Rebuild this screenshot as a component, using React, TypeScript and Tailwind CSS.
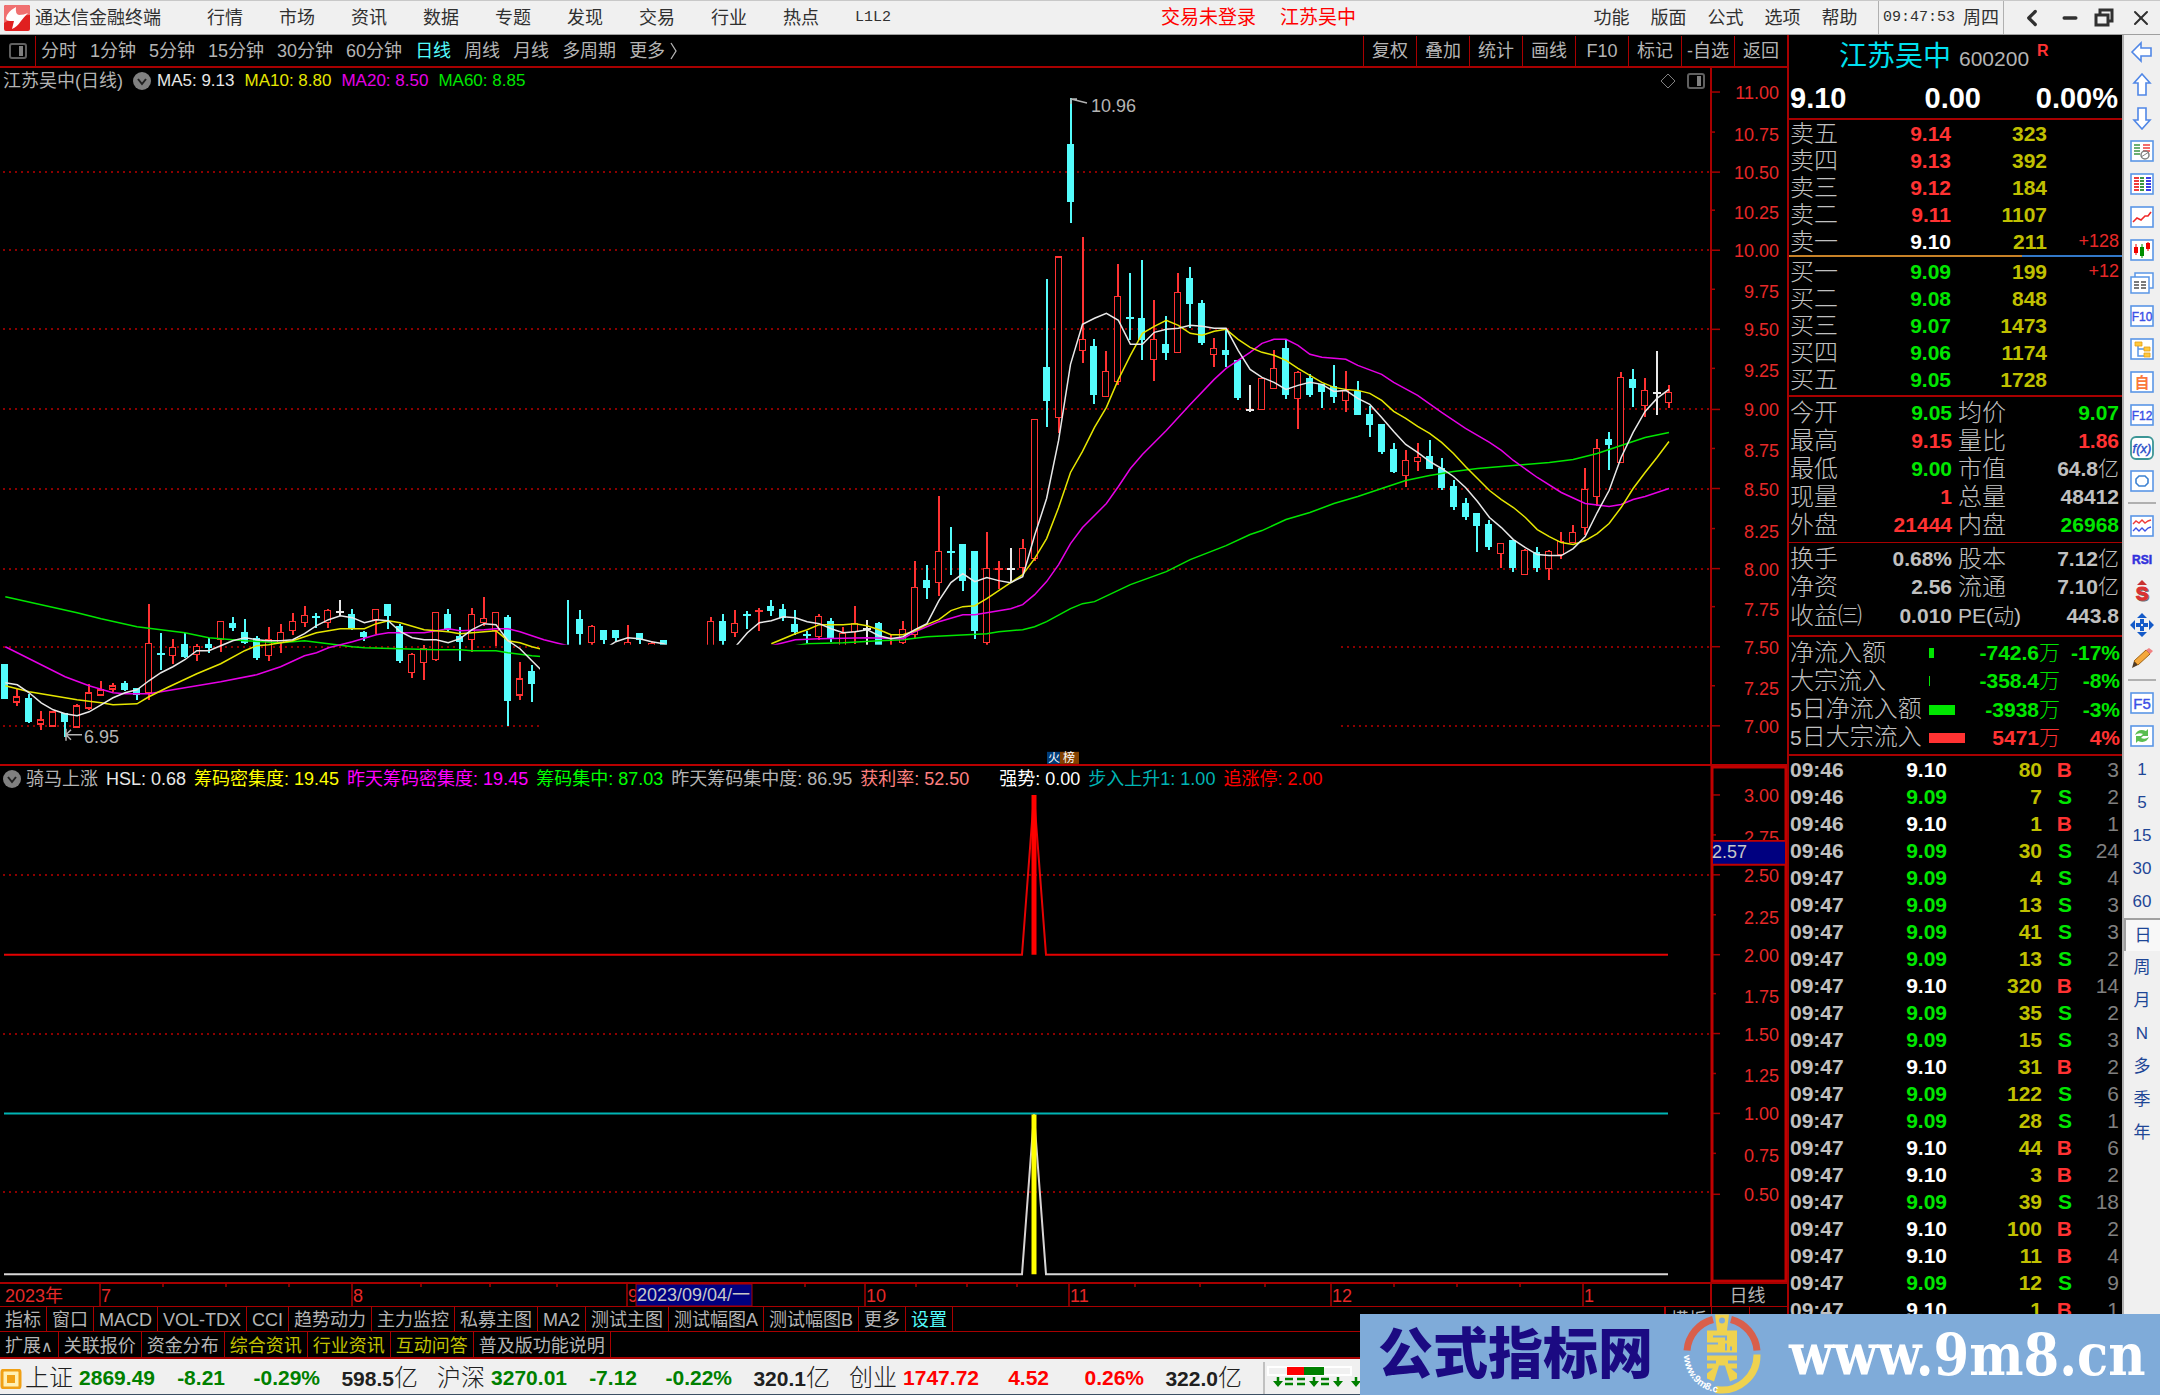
import React from "react";
import { ChevronLeft, Minus, X } from "lucide-react";

type Tone = "r" | "c" | "w";
// index, tone, high, body top, body bottom, low
type Candle = [number, Tone, number, number, number, number];

const candles: Candle[] = [
  [0, "c", 664, 664, 697, 697], [1, "r", 688, 696, 701, 705], [2, "c", 693, 698, 720, 722],
  [3, "r", 710, 719, 723, 729], [4, "r", 711, 711, 725, 725], [5, "c", 713, 713, 720, 736],
  [6, "r", 703, 705, 726, 726], [7, "r", 683, 692, 707, 709], [8, "r", 680, 689, 694, 694],
  [9, "r", 682, 685, 688, 691], [10, "c", 680, 683, 688, 690], [11, "c", 688, 688, 693, 699],
  [12, "r", 603, 643, 692, 699], [13, "c", 632, 653, 654, 669], [14, "r", 638, 647, 655, 663],
  [15, "c", 632, 644, 656, 657], [16, "r", 643, 646, 654, 660], [17, "c", 637, 644, 647, 652],
  [18, "r", 620, 621, 639, 651], [19, "c", 616, 623, 627, 630], [20, "c", 618, 632, 642, 643],
  [21, "c", 635, 638, 657, 659], [22, "r", 626, 639, 655, 660], [23, "r", 623, 632, 642, 652],
  [24, "r", 612, 621, 630, 634], [25, "r", 605, 615, 622, 626], [26, "c", 612, 616, 617, 627],
  [27, "r", 608, 610, 622, 627], [28, "w", 599, 611, 612, 615], [29, "c", 608, 614, 628, 629],
  [30, "c", 630, 632, 636, 640], [31, "r", 608, 609, 619, 633], [32, "c", 604, 604, 615, 628],
  [33, "c", 623, 626, 660, 662], [34, "r", 652, 654, 672, 677], [35, "r", 644, 648, 662, 679],
  [36, "r", 611, 612, 659, 660], [37, "c", 608, 614, 629, 631], [38, "c", 626, 636, 641, 660],
  [39, "r", 607, 614, 639, 651], [40, "r", 596, 618, 622, 625], [41, "r", 612, 612, 630, 645],
  [42, "c", 614, 617, 699, 725], [43, "r", 661, 678, 694, 699], [44, "c", 664, 671, 682, 701],
  [47, "c", 599, 646, 664, 668], [48, "c", 609, 619, 633, 645], [49, "r", 624, 626, 642, 645],
  [50, "c", 630, 630, 639, 643], [51, "c", 630, 630, 637, 641], [52, "r", 624, 642, 646, 648],
  [53, "c", 633, 633, 639, 643], [54, "r", 640, 643, 648, 650], [55, "c", 639, 640, 666, 668],
  [59, "r", 616, 621, 660, 665], [60, "c", 613, 621, 640, 645], [61, "r", 609, 623, 632, 636],
  [62, "c", 610, 614, 615, 628], [63, "r", 607, 610, 612, 630], [64, "c", 599, 606, 610, 615],
  [65, "c", 603, 609, 617, 620], [66, "c", 609, 624, 631, 634], [67, "c", 630, 634, 636, 643],
  [68, "r", 613, 616, 636, 639], [69, "c", 617, 621, 638, 641], [70, "r", 626, 633, 648, 650],
  [71, "r", 605, 623, 631, 643], [72, "w", 619, 628, 629, 650], [73, "c", 621, 623, 656, 658],
  [74, "r", 633, 650, 658, 660], [75, "r", 620, 629, 642, 643], [76, "r", 560, 587, 634, 638],
  [77, "c", 564, 580, 587, 598], [78, "r", 495, 551, 582, 595], [79, "c", 526, 551, 552, 574],
  [80, "c", 544, 544, 580, 590], [81, "c", 551, 551, 630, 638], [82, "r", 531, 568, 642, 646],
  [83, "r", 560, 568, 570, 588], [84, "w", 547, 568, 569, 582], [85, "r", 538, 548, 567, 574],
  [86, "r", 419, 419, 558, 560], [87, "c", 279, 367, 400, 427], [88, "r", 257, 257, 417, 433],
  [89, "c", 98, 145, 201, 223], [90, "r", 237, 339, 350, 363], [91, "c", 339, 346, 394, 404],
  [92, "r", 351, 371, 396, 396], [93, "r", 264, 296, 381, 385], [94, "c", 273, 317, 318, 340],
  [95, "c", 260, 318, 339, 360], [96, "r", 300, 339, 359, 381], [97, "c", 316, 344, 352, 360],
  [98, "r", 273, 292, 352, 352], [99, "c", 267, 279, 303, 328], [100, "c", 300, 303, 342, 345],
  [101, "r", 338, 348, 354, 367], [102, "c", 329, 350, 354, 367], [103, "c", 360, 360, 397, 400],
  [104, "w", 385, 409, 410, 412], [105, "r", 378, 378, 409, 409], [106, "r", 350, 368, 388, 389],
  [107, "c", 340, 348, 394, 399], [108, "r", 371, 372, 398, 429], [109, "c", 374, 378, 394, 397],
  [110, "c", 384, 384, 391, 408], [111, "c", 365, 386, 396, 403], [112, "r", 371, 390, 400, 412],
  [113, "c", 381, 391, 414, 414], [114, "c", 406, 414, 424, 437], [115, "c", 424, 424, 451, 454],
  [116, "c", 443, 449, 471, 473], [117, "r", 450, 460, 475, 486], [118, "r", 443, 457, 461, 471],
  [119, "c", 440, 456, 468, 468], [120, "c", 458, 468, 487, 489], [121, "c", 480, 486, 506, 509],
  [122, "c", 497, 503, 516, 519], [123, "c", 513, 513, 525, 551], [124, "c", 519, 524, 546, 549],
  [125, "r", 543, 543, 553, 567], [126, "c", 540, 540, 567, 571], [127, "r", 548, 550, 574, 574],
  [128, "c", 546, 552, 567, 571], [129, "r", 549, 551, 568, 579], [130, "r", 531, 541, 554, 558],
  [131, "r", 524, 532, 542, 542], [132, "r", 468, 489, 527, 534], [133, "r", 439, 448, 496, 505],
  [134, "c", 432, 439, 444, 470], [135, "r", 372, 377, 462, 462], [136, "c", 369, 379, 387, 407],
  [137, "r", 378, 390, 405, 417], [138, "w", 351, 392, 393, 415], [139, "r", 385, 392, 402, 408],
];

const ma5Left = [
  682, 684, 692, 702, 709, 713, 715, 711, 704, 697, 692, 689, 680, 672, 666, 659, 650, 650, 645, 640, 637, 639, 640,
  640, 639, 633, 625, 619, 615, 617, 622, 619, 620, 631, 637, 639, 639, 642, 638, 629, 623, 624, 640, 648, 660, 672,
];
const ma5Right = [
  649, 641, 637, 638, 641, 643, 650, 665, 668, 665, 658, 646, 632, 622, 620, 616, 617, 621, 623, 628, 632, 631, 629,
  635, 638, 636, 629, 623, 600, 582, 573, 581, 577, 580, 582, 576, 535, 498, 440, 364, 324, 318, 313, 320, 344, 344,
  332, 329, 328, 325, 326, 328, 328, 350, 369, 377, 382, 389, 385, 382, 384, 391, 390, 398, 404, 417, 431, 444, 452,
  461, 468, 476, 487, 501, 517, 527, 539, 547, 554, 555, 555, 548, 536, 512, 490, 457, 432, 411, 398, 389,
];
const ma10Right = [
  643, 638, 633, 629, 624, 624, 624, 623, 625, 629, 634, 634, 630, 624, 619, 610, 606, 605, 598, 590, 582, 574, 558,
  538, 507, 472, 451, 427, 407, 379, 355, 333, 326, 320, 325, 333, 335, 331, 329, 339, 347, 352, 355, 360, 368, 375,
  382, 387, 389, 390, 393, 400, 411, 418, 426, 433, 442, 453, 466, 478, 490, 499, 507, 517, 529, 536, 542, 544, 540,
  533, 523, 507, 488, 472, 457, 441,
];
const ma10Left = [
  [0, 685], [2, 691], [4, 695], [6, 699], [8, 702], [9, 704], [11, 703], [12, 696], [13.5, 687], [16, 673], [18, 663],
  [20, 650], [21, 645], [22, 644], [24, 640], [25, 636], [26, 632], [28, 628], [30, 628], [31, 623], [32, 620],
  [33, 622], [35, 629], [37, 631], [38, 633], [39, 632], [41, 630], [42, 640], [43, 642], [44, 646], [45, 649],
];
const ma20Left = [
  [0, 646], [1, 652], [3, 664], [5, 676], [7, 685], [9, 692], [10, 693], [12, 693], [14, 689], [16, 685], [18, 681],
  [21, 674], [23, 666], [25, 655], [26, 652], [27, 647], [29, 641], [31, 634], [32, 632], [35, 632], [37, 628],
  [38, 630], [40, 629], [41, 628], [42, 628], [43, 631], [44, 635], [45, 639], [46, 642], [47, 645],
];
const ma20Right = [
  [64, 645], [66, 639], [68, 638], [72, 637], [75, 638], [76, 631], [78, 621], [80, 614], [81, 614], [84, 608],
  [85, 604], [86, 594], [87, 581], [88, 564], [89, 543], [90, 527], [92, 503], [93, 486], [94, 468], [95, 454],
  [97, 430], [99, 404], [101, 379], [102, 368], [103, 360], [104, 352], [105, 343], [106, 339], [107, 339],
  [108, 345], [109, 354], [110, 357], [112, 359], [113, 365], [115, 374], [116, 382], [118, 395], [120, 412],
  [122, 428], [124, 442], [125, 450], [126, 460], [128, 477], [130, 492], [132, 503], [134, 506], [135, 504],
  [136, 499], [137, 496], [138, 492], [139, 488],
];
const ma60Left = [
  [0, 596], [3, 604], [6, 612], [8, 618], [11, 626], [13, 629], [15, 632], [17, 637], [20, 640], [23, 642], [25, 640],
  [27, 643], [29, 646], [30, 647], [33, 648], [36, 649], [38, 649], [39, 650], [41, 650], [42, 652], [44, 655],
  [45, 656],
];
const ma60Right = [
  [66, 645], [67, 643], [70, 642], [73, 640], [75, 639], [77, 636], [82, 633], [83, 631], [85, 629], [86, 626],
  [87, 621], [89, 608], [90, 603], [91, 601], [94, 584], [97, 571], [99, 559], [102, 545], [104, 534], [105, 530],
  [107, 519], [109, 512], [111, 503], [113, 496], [115, 488], [117, 480], [119, 475], [121, 471], [123, 468],
  [125, 466], [127, 464], [129, 462], [131, 459], [133, 453], [135, 445], [137, 437], [139, 432],
];

const toneColor = { r: "#ff3232", c: "#54fcfc", w: "#e8e8e8" };
const xAt = (k: number) => 5.3 + k * 11.969;
const toPoints = (pairs: number[][]) => pairs.map(([k, y]) => `${xAt(k).toFixed(1)},${y}`).join(" ");
const fromIndex = (start: number, ys: number[]) => ys.map((y, i) => [start + i, y]);

const lines: [string, number[][]][] = [
  ["#00e600", ma60Left],
  ["#00e600", ma60Right],
  ["#e600e6", ma20Left],
  ["#e600e6", ma20Right],
  ["#e6e600", ma10Left],
  ["#e6e600", fromIndex(64, ma10Right)],
  ["#e8e8e8", fromIndex(0, ma5Left)],
  ["#e8e8e8", fromIndex(50, ma5Right)],
];

const mainGrid = [172, 250, 329, 409, 488, 568, 646, 725];
const subGrid = [874, 1033, 1192];

const mainAxis: [string, number][] = [
  ["11.00", 92], ["10.75", 134], ["10.50", 172], ["10.25", 212], ["10.00", 250], ["9.75", 291], ["9.50", 329],
  ["9.25", 370], ["9.00", 409], ["8.75", 450], ["8.50", 488], ["8.25", 530], ["8.00", 568], ["7.75", 608],
  ["7.50", 646], ["7.25", 687], ["7.00", 725],
];
const subAxis: [string, number][] = [
  ["3.00", 794], ["2.75", 836], ["2.50", 874], ["2.25", 916], ["2.00", 954], ["1.75", 995], ["1.50", 1033],
  ["1.25", 1075], ["1.00", 1113], ["0.75", 1155], ["0.50", 1194],
];

const menus = ["行情", "市场", "资讯", "数据", "专题", "发现", "交易", "行业", "热点", "L1L2"];
const rightMenus = ["功能", "版面", "公式", "选项", "帮助"];
const periods = ["分时", "1分钟", "5分钟", "15分钟", "30分钟", "60分钟", "日线", "周线", "月线", "多周期", "更多"];
const tools = ["复权", "叠加", "统计", "画线", "F10", "标记", "-自选", "返回"];
const tabs = ["指标", "窗口", "MACD", "VOL-TDX", "CCI", "趋势动力", "主力监控", "私募主图", "MA2", "测试主图", "测试幅图A", "测试幅图B", "更多", "设置"];
const links = ["扩展", "关联报价", "资金分布", "综合资讯", "行业资讯", "互动问答", "普及版功能说明"];

const RED = "text-[#ff3232]";
const GREEN = "text-[#00e600]";
const GRAY = "text-[#c0c0c0]";

const asks = [
  ["卖五", "9.14", "323", ""],
  ["卖四", "9.13", "392", ""],
  ["卖三", "9.12", "184", ""],
  ["卖二", "9.11", "1107", ""],
  ["卖一", "9.10", "211", "+128"],
];
const bids = [
  ["买一", "9.09", "199", "+12"],
  ["买二", "9.08", "848", ""],
  ["买三", "9.07", "1473", ""],
  ["买四", "9.06", "1174", ""],
  ["买五", "9.05", "1728", ""],
];

const quotes = [
  ["今开", "9.05", GREEN, "均价", "9.07", GREEN],
  ["最高", "9.15", RED, "量比", "1.86", RED],
  ["最低", "9.00", GREEN, "市值", "64.8亿", GRAY],
  ["现量", "1", RED, "总量", "48412", GRAY],
  ["外盘", "21444", RED, "内盘", "26968", GREEN],
];
const basics = [
  ["换手", "0.68%", GRAY, "股本", "7.12亿", GRAY],
  ["净资", "2.56", GRAY, "流通", "7.10亿", GRAY],
  ["收益㈢", "0.010", GRAY, "PE(动)", "443.8", GRAY],
];
const flows: [string, number, string, string, boolean][] = [
  ["净流入额", 5, "-742.6万", "-17%", false],
  ["大宗流入", 1, "-358.4万", "-8%", false],
  ["5日净流入额", 26, "-3938万", "-3%", false],
  ["5日大宗流入", 36, "5471万", "4%", true],
];

const ticks: [string, string, number, string, number][] = [
  ["09:46", "9.10", 80, "B", 3],
  ["09:46", "9.09", 7, "S", 2],
  ["09:46", "9.10", 1, "B", 1],
  ["09:46", "9.09", 30, "S", 24],
  ["09:47", "9.09", 4, "S", 4],
  ["09:47", "9.09", 13, "S", 3],
  ["09:47", "9.09", 41, "S", 3],
  ["09:47", "9.09", 13, "S", 2],
  ["09:47", "9.10", 320, "B", 14],
  ["09:47", "9.09", 35, "S", 2],
  ["09:47", "9.09", 15, "S", 3],
  ["09:47", "9.10", 31, "B", 2],
  ["09:47", "9.09", 122, "S", 6],
  ["09:47", "9.09", 28, "S", 1],
  ["09:47", "9.10", 44, "B", 6],
  ["09:47", "9.10", 3, "B", 2],
  ["09:47", "9.09", 39, "S", 18],
  ["09:47", "9.10", 100, "B", 2],
  ["09:47", "9.10", 11, "B", 4],
  ["09:47", "9.09", 12, "S", 9],
  ["09:47", "9.10", 1, "B", 1],
];

const indices = [
  ["上证", "2869.49", "-8.21", "-0.29%", "598.5亿", "text-[#008000]"],
  ["沪深", "3270.01", "-7.12", "-0.22%", "320.1亿", "text-[#008000]"],
  ["创业", "1747.72", "4.52", "0.26%", "322.0亿", "text-[#ff0000]"],
];

const PanelIcon = () => (
  <svg width="20" height="18" viewBox="0 0 20 18" fill="none" stroke="#606060" strokeWidth="2">
    <rect x="2" y="2" width="16" height="14" rx="2" />
    <rect x="11" y="4" width="4" height="10" fill="#808080" stroke="none" />
  </svg>
);

const RoundChevron = () => (
  <svg width="18" height="18" viewBox="0 0 18 18" className="shrink-0">
    <circle cx="9" cy="9" r="9" fill="#808080" />
    <path d="M5 7l4 5 4-5" fill="none" stroke="#202020" strokeWidth="2" />
  </svg>
);

const TitleBar = () => (
  <header className="flex h-[35px] shrink-0 items-center border-b border-[#a0a0a0] border-t border-t-[#c8c8c8] bg-[#f0f0f0] text-lg leading-6 text-[#303030]">
    <svg width="26" height="26" viewBox="0 0 26 26" className="ml-1 shrink-0">
      <rect width="26" height="26" rx="2" fill="#e02020" />
      <path d="M0 2q0-2 2-2h22q2 0 2 2v8Q12 10 0 18z" fill="#f07070" />
      <path d="M12 2Q3 7 2 13q0 3 4 3l4 0-2 8q5-2 9-8 4-5 7-8-4 2-9 2-4-1-3-8z" fill="#fff" />
    </svg>
    <span className="ml-[5px] w-[154px]">通达信金融终端</span>
    <nav className="flex">
      {menus.map((m) => (
        <button key={m} className={m === "L1L2" ? "w-18 font-['Liberation_Mono'] text-[15px]" : "w-18"}>
          {m}
        </button>
      ))}
    </nav>
    <div className="ml-auto flex gap-6 text-[19px] text-[#ff0000]">
      <button>交易未登录</button>
      <button>江苏吴中</button>
    </div>
    <nav className="ml-[227px] flex w-[295px]">
      {rightMenus.map((m) => (
        <button key={m} className="w-[57px]">
          {m}
        </button>
      ))}
    </nav>
    <div className="flex h-full w-[126px] items-center justify-center gap-2 border-x border-[#b0b0b0]">
      <span className="font-['Liberation_Mono'] text-[15px]">09:47:53</span>
      <span>周四</span>
    </div>
    <div className="flex w-[156px] items-center justify-around pl-2">
      <button aria-label="后退"><ChevronLeft size={26} strokeWidth={3} /></button>
      <button aria-label="最小化"><Minus size={20} strokeWidth={4} /></button>
      <button aria-label="还原">
        <svg width="20" height="20" viewBox="0 0 20 20" fill="none" stroke="#303030" strokeWidth="3">
          <path d="M6 6V2h12v11h-4" />
          <rect x="2" y="7" width="12" height="10" />
        </svg>
      </button>
      <button aria-label="关闭"><X size={24} strokeWidth={2} /></button>
    </div>
  </header>
);

const Toolbar = () => (
  <div className="flex h-[33px] shrink-0 items-stretch border-b-2 border-[#a80000] pt-px text-lg leading-6 text-[#b4b4b4]">
    <button aria-label="侧栏" className="flex w-9 items-center justify-center border-r border-[#a80000]">
      <PanelIcon />
    </button>
    <nav className="ml-[5px] flex items-center gap-[13px]">
      {periods.map((p) => (
        <button key={p} className={p === "日线" ? "text-[#54fcfc]" : ""}>
          {p}
        </button>
      ))}
      <svg width="8" height="18" viewBox="0 0 8 18" fill="none" stroke="#b4b4b4" strokeWidth="1.3" className="-ml-2">
        <path d="M1 1l5 8-5 8" />
      </svg>
    </nav>
    <div className="ml-auto flex">
      {tools.map((t) => (
        <button key={t} className="w-[53px] border-l border-[#a80000]">
          {t}
        </button>
      ))}
    </div>
  </div>
);

const MainChart = () => (
  <section className="flex min-h-0 flex-[697_1_0%] border-b-2 border-[#b80000]">
    <div className="flex min-w-0 flex-1 flex-col">
      <div className="flex h-[26px] shrink-0 items-center gap-2.5 pl-[3px] text-[17px] leading-6">
        <span className="flex items-center gap-2.5 text-lg leading-6 text-[#b4b4b4]">
          江苏吴中(日线)
          <RoundChevron />
        </span>
        <span className="-ml-1 text-[#e8e8e8]">MA5: 9.13</span>
        <span className="text-[#e6e600]">MA10: 8.80</span>
        <span className="text-[#e600e6]">MA20: 8.50</span>
        <span className="text-[#00e600]">MA60: 8.85</span>
        <svg width="16" height="18" viewBox="0 0 16 18" fill="none" stroke="#808080" className="ml-auto">
          <path d="M8 2l7 7-7 7-7-7z" />
        </svg>
        <span className="mr-1">
          <PanelIcon />
        </span>
      </div>
      <svg viewBox="0 94 1710 669" preserveAspectRatio="none" className="min-h-0 w-full flex-1">
        {mainGrid.map((y) => (
          <line key={y} x1="3" x2="1710" y1={y} y2={y} stroke="#8c0000" strokeWidth="2" strokeDasharray="2 4" shapeRendering="crispEdges" />
        ))}
        <g shapeRendering="crispEdges">
          {candles.map(([k, tone, high, top, bottom, low]) => {
            const x = Math.round(xAt(k)) - 0.5;
            const color = toneColor[tone];
            const flat = bottom - top < 3;
            return (
              <g key={k} stroke={color} strokeWidth="1.5" fill={tone === "c" ? color : "#000"}>
                <line x1={x} x2={x} y1={high} y2={low} strokeWidth="2" />
                {flat ? (
                  <line x1={x - 4} x2={x + 4} y1={top + 0.5} y2={top + 0.5} strokeWidth="2" />
                ) : (
                  <rect x={x - 3} y={top} width="6" height={bottom - top} />
                )}
              </g>
            );
          })}
        </g>
        {lines.map(([color, pairs], i) => (
          <polyline key={i} points={toPoints(pairs)} fill="none" stroke={color} strokeWidth="1.5" />
        ))}
        <rect x="540" y="644" width="800" height="90" fill="#000" />
        <g fontSize="18" fill="#b4b4b4" stroke="none">
          <path d="M1087 103L1071 99M1071 104v-5h6M82 734H66M71 729l-5 5 5 5M66 728v12" stroke="#b4b4b4" strokeWidth="1.5" fill="none" />
          <text x="1091" y="112">10.96</text>
          <text x="84" y="742">6.95</text>
        </g>
        <rect x="1047" y="751" width="13" height="12" fill="#003c78" />
        <rect x="1060" y="751" width="19" height="12" fill="#824100" />
        <text x="1048" y="761" fontSize="12" fill="#fff">火</text>
        <text x="1063" y="761" fontSize="12" fill="#fff">榜</text>
      </svg>
    </div>
    <svg viewBox="1710 68 77 695" preserveAspectRatio="none" className="h-full w-[77px] shrink-0">
      <line x1="1711" x2="1711" y1="68" y2="764" stroke="#a80000" strokeWidth="2" />
      {mainAxis.map(([label, y], i) => (
        <g key={label}>
          <line x1="1712" x2={i % 2 ? 1715 : 1720} y1={i % 2 ? y - 2 : y} y2={i % 2 ? y - 2 : y} stroke="#a80000" strokeWidth="1.5" />
          <text x="1779" y={y + 7} textAnchor="end" fontSize="18" fill="#e62828">{label}</text>
        </g>
      ))}
    </svg>
  </section>
);

const SubChart = () => (
  <section className="flex min-h-0 flex-[517_1_0%]">
    <div className="flex min-w-0 flex-1 flex-col">
      <div className="flex h-[26px] shrink-0 items-center gap-2 pl-[3px] text-lg leading-6 whitespace-nowrap">
        <span className="flex items-center gap-[5px] text-[#b4b4b4]">
          <RoundChevron />
          骑马上涨
        </span>
        <span className="text-[#e8e8e8]">HSL: 0.68</span>
        <span className="text-[#ffff00]">筹码密集度: 19.45</span>
        <span className="text-[#ff00ff]">昨天筹码密集度: 19.45</span>
        <span className="text-[#00ff00]">筹码集中: 87.03</span>
        <span className="text-[#b4b4b4]">昨天筹码集中度: 86.95</span>
        <span className="text-[#ff8080]">获利率: 52.50</span>
        <span className="ml-[22px] text-[#ffffff]">强势: 0.00</span>
        <span className="text-[#00b4b4]">步入上升1: 1.00</span>
        <span className="text-[#ff0000]">追涨停: 2.00</span>
      </div>
      <svg viewBox="0 791 1710 491" preserveAspectRatio="none" className="min-h-0 w-full flex-1">
        {subGrid.map((y) => (
          <line key={y} x1="3" x2="1710" y1={y} y2={y} stroke="#8c0000" strokeWidth="2" strokeDasharray="2 4" shapeRendering="crispEdges" />
        ))}
        <path d="M4 954H1022L1034 794 1046 954H1668" fill="none" stroke="#e60000" strokeWidth="2" />
        <line x1="1034" x2="1034" y1="794" y2="954" stroke="#ff0000" strokeWidth="5" />
        <line x1="4" x2="1668" y1="1113" y2="1113" stroke="#00b4b4" strokeWidth="2" />
        <path d="M4 1274H1022L1034 1114 1046 1274H1668" fill="none" stroke="#d8d8d8" strokeWidth="2" />
        <line x1="1034" x2="1034" y1="1114" y2="1274" stroke="#ffff00" strokeWidth="5" />
      </svg>
    </div>
    <svg viewBox="1710 765 77 517" preserveAspectRatio="none" className="h-full w-[77px] shrink-0">
      <rect x="1712" y="766" width="74" height="515" fill="none" stroke="#c00000" strokeWidth="3" />
      {subAxis.map(([label, y], i) => (
        <g key={label}>
          <line x1="1713" x2={i % 2 ? 1716 : 1720} y1={i % 2 ? y - 2 : y} y2={i % 2 ? y - 2 : y} stroke="#a80000" strokeWidth="1.5" />
          <text x="1779" y={y + 7} textAnchor="end" fontSize="18" fill="#e62828">{label}</text>
        </g>
      ))}
      <rect x="1713" y="840" width="72" height="24" fill="#000080" />
      <path d="M1712 840h74M1712 864h74" stroke="#c00000" strokeWidth="2" />
      <text x="1712" y="857" fontSize="18" fill="#c8c8c8">2.57</text>
    </svg>
  </section>
);

const monthMarks: [string, number][] = [["7", 100], ["8", 352], ["9", 627], ["10", 865], ["11", 1069], ["12", 1331], ["1", 1583]];
const weekMarks = [163, 226, 289, 421, 490, 557, 805, 916, 967, 1017, 1135, 1200, 1265, 1394, 1457, 1520];

const TimeAxis = () => (
  <div className="flex h-6 shrink-0 border-t-2 border-[#a80000] text-lg leading-6">
    <svg viewBox="0 0 1710 22" preserveAspectRatio="none" className="h-full min-w-0 flex-1">
      <g fontSize="18" fill="#e62828">
        <text x="5" y="18">2023年</text>
        {monthMarks.map(([m, x]) => (
          <g key={m}>
            <line x1={x} x2={x} y1="0" y2="22" stroke="#a80000" strokeWidth="1.5" />
            <text x={x + 1} y="18">{m}</text>
          </g>
        ))}
        {weekMarks.map((x) => (
          <line key={x} x1={x} x2={x} y1="0" y2="3" stroke="#a80000" strokeWidth="1.5" />
        ))}
      </g>
      <rect x="636" y="0" width="116" height="22" fill="#000080" stroke="#a80000" />
      <text x="637" y="17" fontSize="18" fill="#c8c8c8">2023/09/04/一</text>
    </svg>
    <span className="w-[77px] border-l-2 border-[#a80000] pr-1 text-center text-[#b4b4b4]">日线</span>
  </div>
);

const BottomTabs = () => (
  <>
    <div className="flex h-[25px] shrink-0 border-t border-[#a80000] text-lg leading-[26px] whitespace-nowrap text-[#b4b4b4]">
      {tabs.map((t) => (
        <button key={t} className={`border-r border-[#a80000] px-[5px] ${t === "设置" ? "text-[#54fcfc]" : ""}`}>
          {t}
        </button>
      ))}
      <div className="ml-auto flex">
        <button className="w-[47px] border-l-2 border-[#a80000]">模板</button>
        <button className="w-[38px] border-l border-[#a80000]">+</button>
        <button className="w-[38px] border-l border-[#a80000]">-</button>
      </div>
    </div>
    <div className="flex h-7 shrink-0 border-y border-b-2 border-[#a80000] text-lg leading-7 whitespace-nowrap text-[#b4b4b4]">
      {links.map((t, i) => (
        <button key={t} className={`border-r border-[#a80000] px-[5px] ${i > 2 && i < 6 ? "text-[#c0c000]" : ""}`}>
          {t}
          {i === 0 && <span className="font-['DejaVu_Sans'] text-base leading-6">∧</span>}
        </button>
      ))}
    </div>
  </>
);

const OrderRows = ({ rows, color }: { rows: string[][]; color: string }) => (
  <table className="w-full table-fixed">
    <tbody>
      {rows.map(([label, price, volume, change]) => (
        <tr key={label} className="h-[27px] text-right text-[21px] leading-[27px] font-bold">
          <th className="w-[71px] text-left text-2xl leading-[27px] font-light text-[#c0c0c0]">{label}</th>
          <td className={`w-[90px] ${price === "9.10" ? "text-white" : color}`}>{price}</td>
          <td className="w-24 text-[#c0c000]">{volume}</td>
          <td className="text-lg leading-[27px] font-normal text-[#e62828]">{change}</td>
        </tr>
      ))}
    </tbody>
  </table>
);

const QuoteRows = ({ rows }: { rows: string[][] }) => (
  <table className="w-full table-fixed">
    <tbody>
      {rows.map(([l1, v1, c1, l2, v2, c2]) => (
        <tr key={l1} className="h-7 text-right text-[21px] leading-7 font-bold whitespace-nowrap">
          <th className="w-[74px] text-left text-2xl leading-7 font-light text-[#c0c0c0]">{l1}</th>
          <td className={`w-[88px] ${c1}`}>{v1}</td>
          <th className="w-[76px] pl-1.5 text-left text-2xl leading-7 font-light text-[#c0c0c0]">
            {l2.startsWith("PE") ? <span className="text-[21px] leading-7"><b>PE</b>(动)</span> : l2}
          </th>
          <td className={c2}>
            {v2.replace("亿", "")}
            {v2.endsWith("亿") && <span className="font-light">亿</span>}
          </td>
        </tr>
      ))}
    </tbody>
  </table>
);

const QuotePanel = () => (
  <aside className="flex w-[335px] shrink-0 flex-col overflow-hidden border-l-2 border-[#a80000]">
    <div className="flex h-10 shrink-0 items-center gap-2 pt-1 pl-[50px]">
      <h1 className="text-[28px] leading-9 text-[#00e0f0]">江苏吴中</h1>
      <span className="pt-1 text-[21px] leading-6 text-[#b4b4b4]">600200</span>
      <span className="self-start text-base leading-6 font-bold text-[#ff3232]">R</span>
    </div>
    <div className="grid h-[45px] shrink-0 grid-cols-[60px_131px_1fr] items-center border-b-2 border-[#a80000] pt-0.5 pr-1 pl-px text-right text-[29px] leading-8 font-bold text-white">
      <span className="text-left">9.10</span>
      <span>0.00</span>
      <span>0.00%</span>
    </div>
    <div className="shrink-0 pr-[3px] pl-px">
      <OrderRows rows={asks} color={RED} />
    </div>
    <div className="flex h-0.5 shrink-0">
      <div className="w-[70%] bg-[#c88228]" />
      <div className="flex-1 bg-[#3278c8]" />
    </div>
    <div className="shrink-0 border-b-2 border-[#a80000] pt-px pr-[3px] pb-0.5 pl-px">
      <OrderRows rows={bids} color={GREEN} />
    </div>
    <div className="shrink-0 border-b border-[#a80000] pt-0.5 pr-[3px] pb-[3px] pl-px">
      <QuoteRows rows={quotes} />
    </div>
    <div className="shrink-0 border-b-2 border-[#a80000] pt-0.5 pr-[3px] pb-[5px] pl-px">
      <QuoteRows rows={basics} />
    </div>
    <div className="shrink-0 border-b-2 border-[#a80000] pt-0.5 pr-0.5 pb-[3px] pl-px">
      {flows.map(([label, width, value, pct, up]) => (
        <div key={label} className={`grid h-7 grid-cols-[139px_1fr_60px] items-center text-right text-[21px] leading-7 font-bold ${up ? "text-[#ff3232]" : "text-[#00e600]"}`}>
          <span className="text-left text-2xl leading-7 font-light whitespace-nowrap text-[#c0c0c0]">
            {label.startsWith("5") ? <b className="text-[21px] leading-7">5</b> : null}
            {label.replace("5", "")}
          </span>
          <span className="flex items-center justify-between">
            <i className={up ? "h-2.5 bg-[#ff3232]" : "h-2.5 bg-[#00e600]"} style={{ width }} />
            <span>
              {value.replace("万", "")}
              <span className="font-light">万</span>
            </span>
          </span>
          <span>{pct}</span>
        </div>
      ))}
    </div>
    <div className="min-h-0 flex-1 overflow-hidden pr-[3px] pl-px">
      <table className="w-full table-fixed">
        <tbody>
          {ticks.map(([time, price, volume, side, count], i) => (
            <tr key={i} className="h-[27px] text-right text-[21px] leading-[27px] font-bold">
              <td className="w-[70px] text-left text-[#c0c0c0]">{time}</td>
              <td className={`w-[87px] ${price === "9.10" ? "text-white" : "text-[#00e600]"}`}>{price}</td>
              <td className="w-[95px] text-[#c0c000]">{volume}</td>
              <td className={`w-[30px] ${side === "B" ? "text-[#ff3232]" : "text-[#00e600]"}`}>{side}</td>
              <td className="font-normal text-[#808080]">{count}</td>
            </tr>
          ))}
        </tbody>
      </table>
    </div>
  </aside>
);

const frame = <rect x="1" y="2" width="22" height="20" fill="#fff" stroke="#5a96e6" strokeWidth="1.6" />;

const sideIcons: [string, React.ReactNode][] = [
  ["左", <path d="M2 12l9-9v5h10v8H11v5z" fill="#fff" stroke="#5087e6" strokeWidth="1.6" />],
  ["上", <path d="M12 1l8 9h-4v12H8V10H4z" fill="#fff" stroke="#5087e6" strokeWidth="1.6" />],
  ["下", <path d="M12 23l8-9h-4V2H8v12H4z" fill="#fff" stroke="#5087e6" strokeWidth="1.6" />],
  ["报价", <>{frame}<path d="M4 6h6M4 9h6M4 12h6M4 15h6" stroke="#3c9646" strokeWidth="1.5" /><path d="M13 6h7M13 9h7M13 12h7" stroke="#f03c3c" strokeWidth="1.5" /><circle cx="15" cy="16" r="4" fill="none" stroke="#808080" strokeWidth="1.5" /><path d="M11 18l8-5" stroke="#808080" /></>],
  ["列表", <>{frame}<path d="M4 6h5M4 9h5M4 12h5M4 15h5M4 18h5" stroke="#f03c3c" strokeWidth="2" /><path d="M10 6h4M10 9h4M10 12h4M10 15h4M10 18h4" stroke="#3c9646" strokeWidth="2" /><path d="M16 6h5M16 9h5M16 12h5M16 15h5M16 18h5" stroke="#3c3ce6" strokeWidth="2" /></>],
  ["走势", <>{frame}<path d="M3 17l4-4 4 2 4-4h3l3-4" fill="none" stroke="#f02828" strokeWidth="1.6" /></>],
  ["K线", <>{frame}<path d="M6 6v11M18 4v9" stroke="#f00000" /><path d="M12 6v14" stroke="#008c00" /><path d="M4 9h4v6H4zM16 5h4v6h-4z" fill="#f00000" /><path d="M10 9h4v9h-4z" fill="#008c00" /></>],
  ["资讯", <><rect x="5" y="2" width="18" height="15" fill="#fff" stroke="#5a96e6" strokeWidth="1.5" /><rect x="1" y="6" width="18" height="16" fill="#fff" stroke="#5a96e6" strokeWidth="1.5" /><path d="M4 11h5M11 11h5M4 14h5M11 14h5M4 17h5M11 17h5" stroke="#505050" strokeWidth="1.4" /></>],
  ["F10", <>{frame}<text x="12" y="17" textAnchor="middle" fontSize="12" fill="#3c50e6" stroke="#3c50e6" strokeWidth=".4">F10</text></>],
  ["树", <>{frame}<path d="M8 8v11h6M8 12h6" fill="none" stroke="#5a96e6" strokeWidth="1.5" /><path d="M5 5h7v4H5zM14 10h6v4h-6zM14 16h6v4h-6z" fill="#ffc83c" stroke="#e6a014" strokeWidth=".8" /></>],
  ["自选", <>{frame}<text x="12" y="18" textAnchor="middle" fontSize="15" fontWeight="bold" fill="#fa783c">自</text></>],
  ["F12", <>{frame}<text x="12" y="17" textAnchor="middle" fontSize="12" fill="#3c50e6" stroke="#3c50e6" strokeWidth=".4">F12</text></>],
  ["公式", <><rect x="1" y="1" width="22" height="22" rx="5" fill="#fff" stroke="#3c9696" strokeWidth="1.8" /><text x="12" y="17" textAnchor="middle" fontSize="13" fontStyle="italic" fill="#2850c8" stroke="#2850c8" strokeWidth=".4">f(x)</text></>],
  ["圈", <>{frame}<path d="M9 7h6l3 3v4l-3 3H9l-3-3v-4z" fill="none" stroke="#3c82d2" strokeWidth="1.6" /></>],
  ["-", null],
  ["多线", <>{frame}<path d="M3 10l3-3 3 2 3-3 3 3 3-2 3-1" fill="none" stroke="#f03c3c" strokeWidth="1.4" /><path d="M3 17l3-3 3 3 3-3 3 3 3-3 3-1" fill="none" stroke="#3c50e6" strokeWidth="1.4" /></>],
  ["RSI", <text x="12" y="17" textAnchor="middle" fontSize="12" fontWeight="bold" fill="#3232dc" stroke="#3232dc" strokeWidth=".5">RSI</text>],
  ["资金", <><path d="M7 5l5-5 5 5z" fill="#c83232" /><text x="13" y="21" textAnchor="middle" fontSize="19" fontWeight="bold" fill="#707070" stroke="#707070">S</text><text x="12" y="20" textAnchor="middle" fontSize="19" fontWeight="bold" fill="#dc3232" stroke="#dc3232">S</text></>],
  ["移动", <path fillRule="evenodd" d="M12 0l5 5H7zM12 24l5-5H7zM0 12l5-5v10zM24 12l-5-5v10zM10 6h4v4h4v4h-4v4h-4v-4H6v-4h4zM11 11v2h2v-2z" fill="#145ac8" />],
  ["画笔", <><path d="M2 22l2-7 4 4z" fill="#503c28" /><path d="M4 15L16 4l4 4L8 19z" fill="#f5a83c" stroke="#a06414" /><path d="M16 4l3-2 4 3-3 3z" fill="#f08282" /></>],
  ["-", null],
  ["F5", <>{frame}<text x="12" y="18" textAnchor="middle" fontSize="15" fill="#3c50e6" stroke="#3c50e6" strokeWidth=".4">F5</text></>],
  ["刷新", <>{frame}<path d="M5 11q3-7 11-4l2-2v7h-7l2-2q-4-2-8 1zM19 13q-3 7-11 4l-2 2v-7h7l-2 2q4 2 8-1z" fill="#5abe50" /></>],
];
const sidePeriods = ["1", "5", "15", "30", "60", "日", "周", "月", "N", "多", "季", "年"];

const SideBar = () => (
  <nav className="flex w-[38px] shrink-0 flex-col border-l-2 border-[#b0b0b0] bg-[#f0f0f0]">
    {sideIcons.map(([name, art], i) =>
      art === null ? (
        <div key={i} className="mx-1 my-[5px] h-0.5 shrink-0 bg-[#b0b0b0]" />
      ) : (
        <button key={i} aria-label={name} className="flex h-[33px] shrink-0 items-center justify-center">
          <svg width="24" height="24" viewBox="0 0 24 24">{art}</svg>
        </button>
      )
    )}
    <div className="flex shrink-0 flex-col pt-px">
      {sidePeriods.map((p) => (
        <button
          key={p}
          className={`h-[33px] text-[17px] leading-6 text-[#1e4696] ${p === "日" ? "border-t-2 border-l-2 border-[#a0a0a0] bg-[#f8f8f8]" : ""}`}
        >
          {p}
        </button>
      ))}
    </div>
  </nav>
);

const StatusBar = () => (
  <footer className="flex h-9 shrink-0 items-center border-b border-[#3c5064] bg-[#f0f0f0] pt-1 text-[21px] leading-8 font-bold text-[#202020]">
    <svg width="22" height="20" viewBox="0 0 22 20" className="mr-[3px] shrink-0">
      <rect x="2" y="1" width="18" height="18" rx="2" fill="#fff0b4" stroke="#f0a014" strokeWidth="3" />
      <rect x="7" y="6" width="8" height="8" fill="#f0a014" />
    </svg>
    {indices.map(([name, value, change, pct, amount, color]) => (
      <div key={name} className="mr-[19px] grid grid-cols-[54px_76px_70px_95px_98px] text-right">
        <span className="text-left text-2xl leading-8 font-light">{name}</span>
        <span className={color}>{value}</span>
        <span className={color}>{change}</span>
        <span className={color}>{pct}</span>
        <span>
          {amount.replace("亿", "")}
          <span className="text-2xl leading-8 font-light">亿</span>
        </span>
      </div>
    ))}
    <svg width="100" height="34" viewBox="0 0 100 34" className="shrink-0">
      <path d="M3 0v32" stroke="#909090" />
      <path d="M7 5h83v8H7z" fill="#f0f0f0" stroke="#fff" strokeWidth="2" />
      <path d="M26 5h17v8H26z" fill="#ff0000" />
      <path d="M43 5h20v8H43z" fill="#008000" />
      <path d="M17 15v8M53 15v8M77 15v8M95 15v8M24 17h8M24 22h8M36 17h8M36 22h8M60 17h8M60 22h8" stroke="#008000" strokeWidth="2.5" />
      <path d="M12 19h10l-5 6zM48 19h10l-5 6zM72 19h10l-5 6zM90 19h10l-5 6z" fill="#008000" />
    </svg>
  </footer>
);

const Banner = () => (
  <a href="#" className="absolute right-0 bottom-0 flex h-[81px] w-[800px] items-center bg-[#7fabd9] pl-[18px] whitespace-nowrap">
    <span className="text-[55px] leading-[81px] font-black text-[#1b0a82]">公式指标网</span>
    <svg width="82" height="81" viewBox="-41 -40.5 82 81" className="ml-7 shrink-0">
      <path d="M-35 -4A35 35 0 0 1 -9 -35M9 -35A35 35 0 0 1 35 -4" fill="none" stroke="#d95f4b" strokeWidth="7" />
      <path d="M35 0A35 35 0 0 1 -6 35" fill="none" stroke="#efd24f" strokeWidth="7" />
      <path d="M-7 -40H7L5 -24H15V-2H-15V-24H-5ZM-15 1H15V6H6V9H15V14H9L15 19V24L8 27L3 11H-3L-8 27L-15 24V19L-9 14H-15V9H-6V6H-15Z" fill="#efd24f" />
      <path d="M-9 -18H4V-14M-15 -11H-4M4 -11V-4M9 -8V-4" fill="none" stroke="#7fabd9" strokeWidth="2" />
      <circle cx="0" cy="-34" r="3" fill="#7fabd9" />
      <path id="rim" d="M-38 1A38 38 0 0 0 -4 38" fill="none" />
      <text fontSize="10" fontWeight="bold" fill="#fff">
        <textPath href="#rim">www.9m8.cn</textPath>
      </text>
    </svg>
    <span className="ml-[26px] font-['DejaVu_Serif_Condensed','DejaVu_Serif',serif] text-[57px] leading-[76px] font-bold text-white">www.9m8.cn</span>
  </a>
);

const App: React.FC = () => (
  <div className="relative flex h-screen flex-col overflow-hidden bg-black font-['Liberation_Sans','Noto_Sans_CJK_SC',sans-serif]">
    <TitleBar />
    <main className="flex min-h-0 flex-1">
      <div className="flex min-w-0 flex-1 flex-col">
        <Toolbar />
        <MainChart />
        <SubChart />
        <TimeAxis />
        <BottomTabs />
      </div>
      <QuotePanel />
      <SideBar />
    </main>
    <StatusBar />
    <Banner />
  </div>
);

export default App;
